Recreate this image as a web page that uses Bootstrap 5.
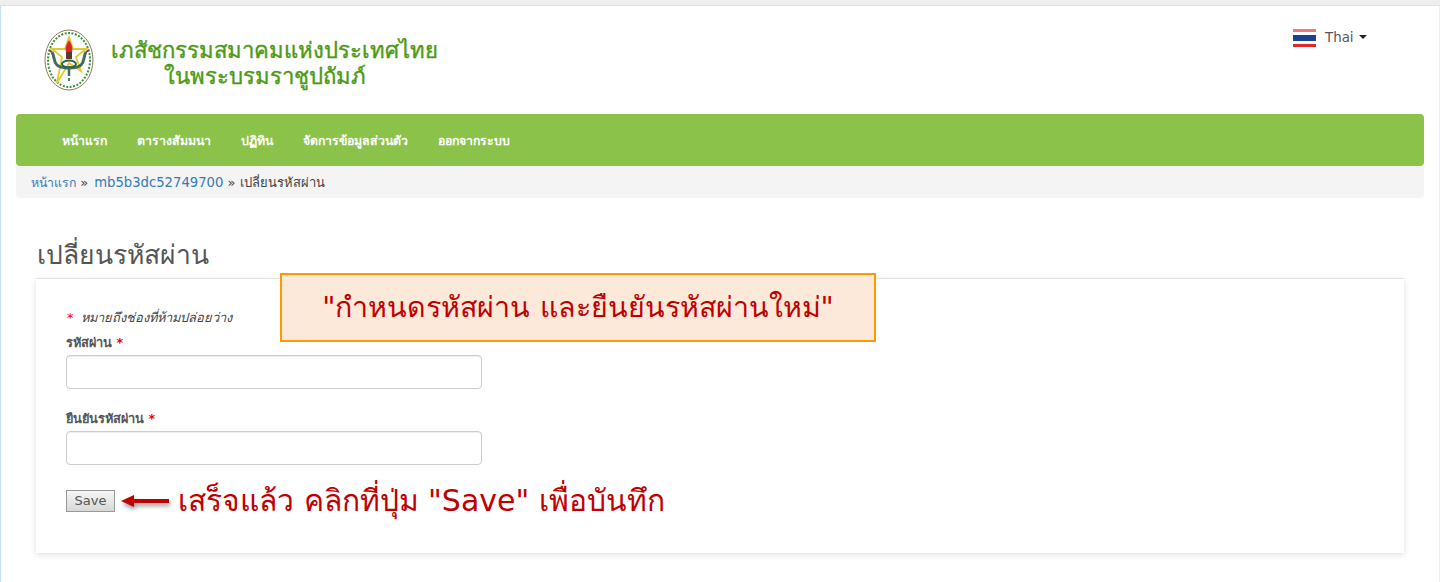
<!DOCTYPE html>
<html lang="th">
<head>
    <meta charset="UTF-8">
    <title>เปลี่ยนรหัสผ่าน</title>
    <link href="https://cdn.jsdelivr.net/npm/bootstrap@5.3.2/dist/css/bootstrap.min.css" rel="stylesheet">
    <style>
        html, body { height: 582px; overflow: hidden; }
        body {
            background: #fff;
            font-family: Verdana, "DejaVu Sans", "Noto Sans", sans-serif;
            font-size: 13px;
            color: #444;
        }
        .top-strip { height: 6px; background: #eee; border-bottom: 1px solid #d3e3ef; }
        .page-frame { border-left: 1px solid #c6e0f0; border-right: 1px solid #e6f0f6; height: 576px; padding: 0 15px; position: relative; }
        .site-head { height: 108px; }
        .site-logo { margin: 22px 0 0 28px; width: 50px; height: 64px; }
        .site-name { margin: 31px 0 0 15px; width: 331px; text-align: center; color: #4d9a12; font-size: 22.1px; line-height: 26px; -webkit-text-stroke: .4px #4d9a12; }
        .site-name span { display: block; padding-right: 19px; }
        .lang-pick { position: absolute; top: 23px; left: 1292px; color: #555; font-size: 13.4px; line-height: 18px; }
        .lang-pick svg { margin-right: 9px; }
        .lang-caret { display: inline-block; margin-left: 5px; vertical-align: 3px; border-top: 4px solid #222; border-left: 4px solid transparent; border-right: 4px solid transparent; }
        .main-nav { height: 52px; background: #8bc34a; border-radius: 4px; padding-left: 31px; }
        .main-nav a { color: #fff; font-size: 12.3px; font-weight: 700; text-decoration: none; padding: 0 15px; line-height: 54px; }
        .crumb-bar { height: 32px; background: #f4f4f4; border-radius: 0 0 4px 4px; padding-left: 15px; line-height: 33px; font-size: 13px; color: #444; }
        .crumb-bar a { color: #337ab7; text-decoration: none; }
        .crumb-home { font-size: 12.3px; }
        .crumb-id { font-size: 13.2px; margin-left: 2px; }
        .page-title { margin: 41px 0 0 21px; padding: 0; font-size: 26.5px; line-height: 32px; font-weight: 400; color: #555; height: 39px; }
        .form-panel { margin: 0 20px; height: 275px; border-top: 1px solid #e4e4e4; box-shadow: 0 2px 6px rgba(0,0,0,.12); padding: 30px 30px 0; }
        .req-note { font-style: italic; font-size: 12.9px; line-height: 18px; color: #444; margin-bottom: 7px; }
        .req-note .req-star { margin: 0 3px 0 1px; }
        .req-star { color: #e00; }
        .field-label { display: block; font-size: 12.8px; font-weight: 700; line-height: 18px; margin: 0 0 3px; color: #555; }
        .field-input { display: block; width: 416px; height: 34px; border: 1px solid #ccc; border-radius: 4px; box-shadow: inset 0 1px 1px rgba(0,0,0,.075); margin-bottom: 21px; }
        .field-input.last-field { margin-bottom: 25px; }
        .save-btn { font-size: 13px; line-height: 18px; padding: 1px 7px; width: 49px; height: 22px; color: #555; border: 1px solid #999; background: linear-gradient(#f6f6f6, #d8d8d8); border-radius: 0; }
        .note-box { position: absolute; left: 279px; top: 267px; width: 596px; height: 69px; background: #fde9d9; border: 2px solid #f90; color: #c00000; text-align: center; font-size: 28.6px; line-height: 65px; }
        .save-note { position: absolute; left: 119px; top: 476px; display: flex; align-items: center; color: #c00000; font-size: 30px; line-height: 38px; }
        .save-arrow { margin-top: 2px; filter: drop-shadow(1px 3px 2px rgba(0,0,0,.4)); }
    </style>
</head>
<body>
    <div class="top-strip"></div>
    <div class="page-frame">
        <div class="site-head d-flex">
            <svg class="site-logo" viewBox="0 0 50 64">
                <ellipse cx="25" cy="32" rx="24" ry="30" fill="#fff" stroke="#8a7a5a" stroke-width="1"/>
                <ellipse cx="25" cy="32" rx="21" ry="27" fill="none" stroke="#3f8f3f" stroke-width="2" stroke-dasharray="2 1.5"/>
                <polygon points="25,9 29,21 42,21 32,29 37,43 25,35 13,55 18,29 8,21 21,21" fill="#fff" stroke="#e3c92c" stroke-width="1.8"/>
                <path d="M25 12c3 5 4 8 3 12h-6c-1-4 0-7 3-12z" fill="#d8262a"/>
                <rect x="22" y="24" width="6" height="7" fill="#5a3a28"/>
                <path d="M8 24c3 5 1 9 5 13 4 4 20 4 24 0 4-4 2-8 5-13" fill="none" stroke="#3e6f5c" stroke-width="3"/>
                <path d="M8 24l-3-2M42 24l3-2" stroke="#7a4a30" stroke-width="2"/>
                <ellipse cx="25" cy="36" rx="7" ry="3.5" fill="none" stroke="#2f5f58" stroke-width="2"/>
                <path d="M25 38v10" stroke="#3e6f5c" stroke-width="2.5"/>
                <path d="M25 50v3" stroke="#3f8f3f" stroke-width="2"/>
            </svg>
            <div class="site-name">เภสัชกรรมสมาคมแห่งประเทศไทย<span>ในพระบรมราชูปถัมภ์</span></div>
        </div>
        <div class="lang-pick">
            <svg width="23" height="18" viewBox="0 0 23 18" class="align-middle">
                <rect width="23" height="3" y="0" fill="#ee7a7e"/>
                <rect width="23" height="3" y="3" fill="#fff"/>
                <rect width="23" height="6" y="6" fill="#1f3f8f"/>
                <rect width="23" height="3" y="12" fill="#fff"/>
                <rect width="23" height="3" y="15" fill="#e0282c"/>
            </svg>Thai<span class="lang-caret"></span>
        </div>
        <nav class="main-nav d-flex">
            <a href="#">หน้าแรก</a>
            <a href="#">ตารางสัมมนา</a>
            <a href="#">ปฏิทิน</a>
            <a href="#">จัดการข้อมูลส่วนตัว</a>
            <a href="#">ออกจากระบบ</a>
        </nav>
        <div class="crumb-bar"><a href="#" class="crumb-home">หน้าแรก</a> » <a href="#" class="crumb-id">mb5b3dc52749700</a> » เปลี่ยนรหัสผ่าน</div>
        <h1 class="page-title">เปลี่ยนรหัสผ่าน</h1>
        <div class="form-panel">
            <div class="req-note"><span class="req-star">*</span> หมายถึงช่องที่ห้ามปล่อยว่าง</div>
            <label class="field-label">รหัสผ่าน <span class="req-star">*</span></label>
            <input class="field-input" type="password">
            <label class="field-label">ยืนยันรหัสผ่าน <span class="req-star">*</span></label>
            <input class="field-input last-field" type="password">
            <button class="save-btn" type="button">Save</button>
        </div>
        <div class="note-box">"กำหนดรหัสผ่าน และยืนยันรหัสผ่านใหม่"</div>
        <div class="save-note">
            <svg width="50" height="20" viewBox="0 0 50 20" class="save-arrow me-2">
                <path d="M1 9l13-6v4h35v4H14v4z" fill="#c00000"/>
            </svg>เสร็จแล้ว คลิกที่ปุ่ม "Save" เพื่อบันทึก
        </div>
    </div>
    <script src="https://cdn.jsdelivr.net/npm/bootstrap@5.3.2/dist/js/bootstrap.bundle.min.js"></script>
</body>
</html>
